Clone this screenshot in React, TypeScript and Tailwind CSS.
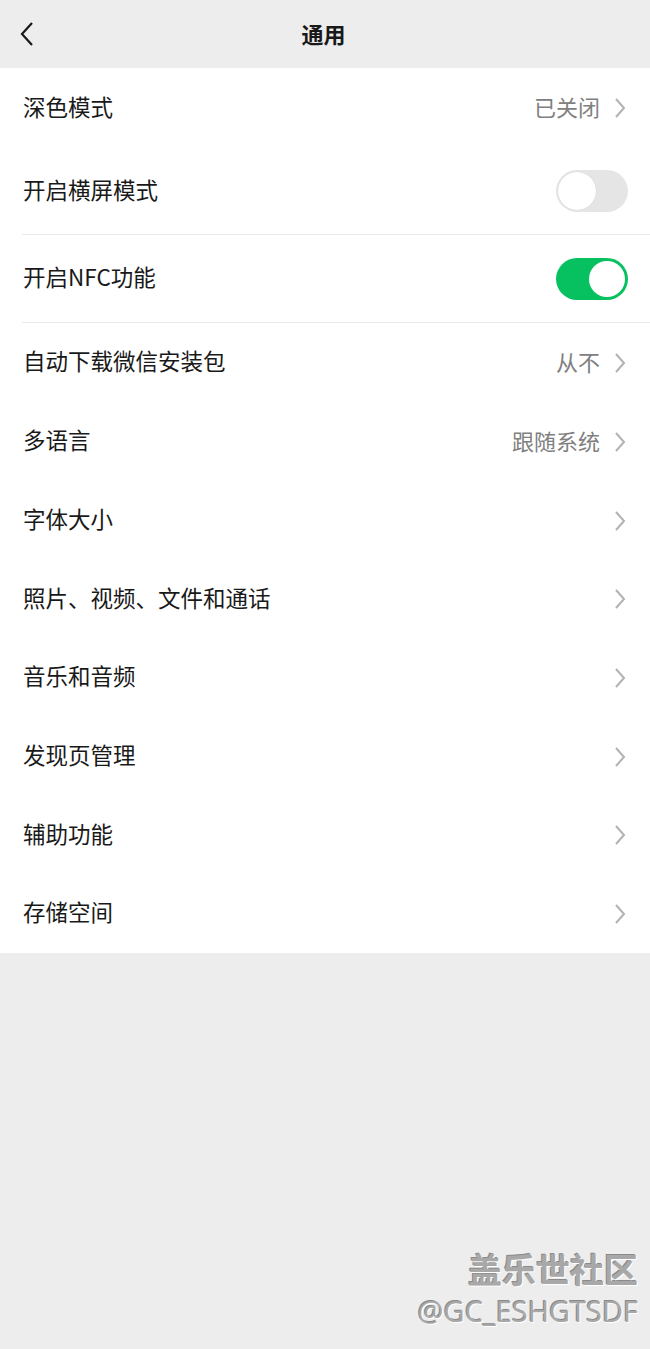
import { ReactNode } from "react";

type Item = {
  label: string;
  value?: string;
  toggle?: "on" | "off";
  h: string;
  divider?: boolean;
};

const items: Item[] = [
  { label: "深色模式", value: "已关闭", h: "h-[80px]" },
  { label: "开启横屏模式", toggle: "off", h: "h-[86px]" },
  { label: "开启NFC功能", toggle: "on", h: "h-[87px]", divider: true },
  { label: "自动下载微信安装包", value: "从不", h: "h-[79px]", divider: true },
  { label: "多语言", value: "跟随系统", h: "h-[79px]" },
  { label: "字体大小", h: "h-[79px]" },
  { label: "照片、视频、文件和通话", h: "h-[78px]" },
  { label: "音乐和音频", h: "h-[79px]" },
  { label: "发现页管理", h: "h-[79px]" },
  { label: "辅助功能", h: "h-[78px]" },
  { label: "存储空间", h: "h-[79px]" },
];

function Chevron() {
  return (
    <svg width="12" height="22" viewBox="0 0 12 22" className="ml-[14px] mr-[2px]">
      <path d="M2 2 L10 11 L2 20" fill="none" stroke="#b2b2b2" strokeWidth="2" />
    </svg>
  );
}

function Toggle({ on }: { on: boolean }) {
  return on ? (
    <div className="w-[72px] h-[42px] rounded-full bg-[#07c160] flex items-center justify-end p-[3px]">
      <div className="w-[36px] h-[36px] rounded-full bg-white" />
    </div>
  ) : (
    <div className="w-[72px] h-[42px] rounded-full bg-[#e5e5e5] flex items-center p-[2px]">
      <div className="w-[38px] h-[38px] rounded-full bg-white shadow-[0_0_1px_rgba(0,0,0,0.15)]" />
    </div>
  );
}

function Row({ item }: { item: Item }) {
  let right: ReactNode = null;
  if (item.toggle) {
    right = <Toggle on={item.toggle === "on"} />;
  } else {
    right = (
      <div className="flex items-center">
        {item.value && <span className="text-[22px] text-[#808080] pb-[3px]">{item.value}</span>}
        <Chevron />
      </div>
    );
  }
  return (
    <div className={`${item.h} flex items-center justify-between pl-[23px] pr-[22px]`}>
      <span className="text-[22.5px] text-[#191919] pb-[3px]">{item.label}</span>
      {right}
    </div>
  );
}

export default function App() {
  return (
    <div
      className="w-[650px] h-[1349px] bg-[#ededed] flex flex-col"
      style={{ fontFamily: '"Noto Sans CJK SC", "Noto Sans", sans-serif' }}
    >
      <div className="h-[68px] relative flex items-center justify-center">
        <svg
          width="16"
          height="26"
          viewBox="0 0 16 26"
          className="absolute left-[19px] top-[21px]"
        >
          <path d="M13 2 L3 13 L13 24" fill="none" stroke="#191919" strokeWidth="2.2" />
        </svg>
        <span className="text-[22px] font-bold text-[#191919] pb-[2px] -ml-[3px]">通用</span>
      </div>
      <div className="bg-white">
        {items.map((it) => (
          <div key={it.label}>
            {it.divider && <div className="h-px bg-[#e8e8e8] ml-[22px]" />}
            <Row item={it} />
          </div>
        ))}
      </div>
      <div className="flex-1" />
      <div className="flex flex-col items-end pr-[12px] pb-[18px]">
        <span className="text-[34px] font-bold leading-[44px] text-[#a8a8a8] [text-shadow:1px_1px_0_#ffffff,-1px_-1px_0_#8a8a8a]">
          盖乐世社区
        </span>
        <span
          className="text-[29px] leading-[40px] text-[#a8a8a8] [text-shadow:1px_1px_0_#ffffff,-1px_-1px_0_#8a8a8a]"
          style={{ fontFamily: '"Open Sans", "Noto Sans", sans-serif' }}
        >
          @GC_ESHGTSDF
        </span>
      </div>
    </div>
  );
}
